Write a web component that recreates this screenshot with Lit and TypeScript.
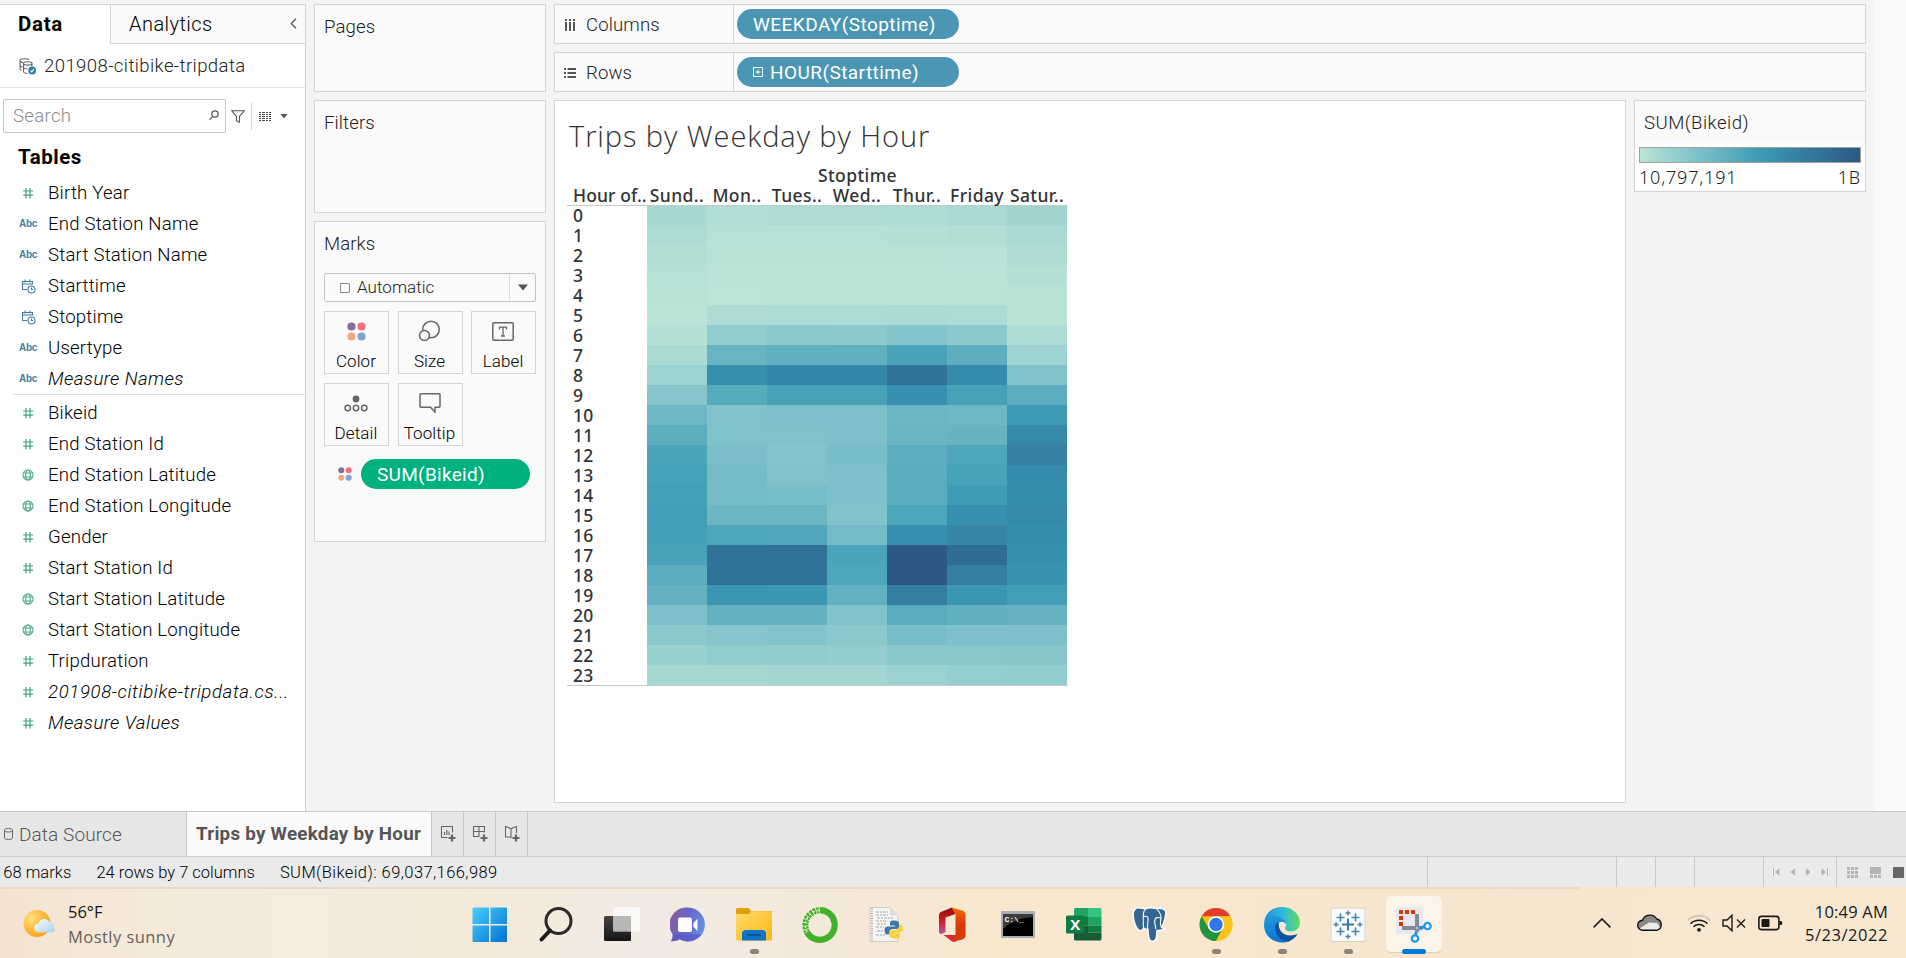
import { LitElement, html, css, svg, nothing } from "lit";
import { customElement } from "lit/decorators.js";

const RAMP = [
  "bce4d8", "aedcd5", "a1d5d2", "95cecf", "89c8cc", "7ec1ca", "72bac6", "66b2c2", "59acbe", "4ba5ba",
  "419eb6", "3b96b2", "358ead", "3586a7", "347ea1", "32779b", "316f96", "2f6790", "2d5f8a", "2c5985",
];

// Position of every hour/weekday cell on the colour ramp (0 = lowest, 19 = highest).
const CELLS: number[][] = [
  [1.6, 0.8, 1, 1, 1.1, 1.4, 2.2],
  [1.1, 0.4, 0.4, 0.4, 0.5, 0.7, 1.4],
  [0.7, 0.2, 0.2, 0.2, 0.2, 0.3, 1],
  [0.4, 0.1, 0.1, 0.1, 0.1, 0.1, 0.5],
  [0.2, 0, 0.15, 0.15, 0.15, 0.15, 0.2],
  [0.1, 1, 1.1, 1.1, 1.2, 1.1, 0.2],
  [0.5, 3.3, 3.9, 3.7, 4.5, 3.9, 1.1],
  [1.2, 6.8, 7.4, 7.4, 9.3, 7.6, 2.3],
  [2.3, 11.8, 12.7, 12.7, 15.6, 12.4, 4.8],
  [4.4, 8.2, 9.4, 9.4, 11.7, 9.4, 7.8],
  [6.3, 4.9, 5.1, 5.1, 6.6, 6.3, 10.5],
  [7.7, 4.8, 4.9, 5, 6.7, 6.9, 12.5],
  [9, 5.4, 4.6, 5.5, 7.8, 8.8, 13.5],
  [9.5, 5.7, 4.8, 5, 7.9, 9.3, 12.4],
  [9.7, 5.7, 5.5, 5, 7.9, 10.2, 12.1],
  [10, 6.5, 6.5, 4.7, 8.9, 11.7, 12.6],
  [9.9, 8.8, 8.6, 5.8, 11.7, 13, 12.1],
  [9.3, 15.6, 15.6, 9.1, 19, 16.3, 11.8],
  [7.9, 15.6, 15.6, 8.8, 19, 14, 11.5],
  [7.1, 11, 10.9, 7.3, 14, 11, 10],
  [5, 7.2, 7.2, 4.7, 8, 7.4, 7],
  [3.9, 4.4, 4.6, 3.8, 5.5, 5, 5],
  [2.7, 3.3, 3.4, 3.1, 4, 4.1, 4.2],
  [1.7, 1.7, 1.9, 1.9, 2.5, 3, 3.3],
];

const rampColor = (v: number) => {
  const i = Math.min(Math.floor(v), RAMP.length - 2);
  const t = v - i;
  const ch = (hex: string, k: number) => parseInt(hex.slice(k, k + 2), 16);
  const mix = [0, 2, 4].map((k) => Math.round(ch(RAMP[i], k) * (1 - t) + ch(RAMP[i + 1], k) * t));
  return `rgb(${mix.join(",")})`;
};

type Kind = "num" | "abc" | "date" | "geo";

const kindIcon = (kind: Kind) => {
  switch (kind) {
    case "abc":
      return html`<span class="abc">Abc</span>`;
    case "num":
      return html`<svg width="16" height="14" viewBox="0 0 16 14" fill="none" stroke="#3fa381" stroke-width="1.2">
        <path d="M6 2v10.500M10 2v10.500M3.200 5h10M3.200 9.200h10" />
      </svg>`;
    case "date":
      return html`<svg width="16" height="16" viewBox="0 0 16 16" fill="none" stroke="#3f7f9e" stroke-width="1.1">
        <path d="M7 11.500H2.500V3.500h10V6.500M2.500 6h10M5 1.500v3M10 1.500v3" />
        <circle cx="11.500" cy="11.500" r="3.500" /><path d="M11.500 9.500v2H13" />
      </svg>`;
    default:
      return html`<svg width="14" height="14" viewBox="0 0 14 14" fill="none" stroke="#4cab88" stroke-width="1.1">
        <circle cx="7" cy="7" r="5" /><ellipse cx="7" cy="7" rx="2.300" ry="5" /><path d="M2.500 5h9M2.500 9h9" />
      </svg>`;
  }
};

type NameStyle = "plain" | "italic" | "italic wide";

const DIMENSIONS: [Kind, string, NameStyle?][] = [
  ["num", "Birth Year"],
  ["abc", "End Station Name"],
  ["abc", "Start Station Name"],
  ["date", "Starttime"],
  ["date", "Stoptime"],
  ["abc", "Usertype"],
  ["abc", "Measure Names", "italic"],
];

const MEASURES: [Kind, string, NameStyle?][] = [
  ["num", "Bikeid"],
  ["num", "End Station Id"],
  ["geo", "End Station Latitude"],
  ["geo", "End Station Longitude"],
  ["num", "Gender"],
  ["num", "Start Station Id"],
  ["geo", "Start Station Latitude"],
  ["geo", "Start Station Longitude"],
  ["num", "Tripduration"],
  ["num", "201908-citibike-tripdata.cs...", "italic wide"],
  ["num", "Measure Values", "italic"],
];

const colorDots = (size: number) => html`<svg width=${size} height=${size} viewBox="0 0 20 20">
  <circle cx="4.700" cy="4.700" r="4.300" fill="#86709a" /><circle cx="15.300" cy="4.700" r="4.300" fill="#f46c80" />
  <circle cx="4.700" cy="15.300" r="4.300" fill="#f4a67c" /><circle cx="15.300" cy="15.300" r="4.300" fill="#80a4cd" />
</svg>`;

@customElement("data-pane")
export class DataPane extends LitElement {
  static styles = css`
    :host { display: flex; flex-direction: column; width: 305px; border-right: 1px solid #d0d0d0; background: #fff; }
    .tabs { display: flex; height: 40px; box-sizing: border-box; border-top: 1px solid #d4d4d4; }
    .tab-data { width: 110px; box-sizing: border-box; padding: 6px 0 0 18px; font-weight: 700; font-size: 20.500px; line-height: 27px; letter-spacing: .7px; }
    .tab-analytics {
      flex: 1; display: flex; align-items: center; justify-content: space-between; box-sizing: border-box;
      padding: 0 8px 1px 18px; border-left: 1px solid #d4d4d4; border-bottom: 1px solid #d4d4d4; background: #fafafa;
      font-size: 20px; letter-spacing: .45px;
    }
    .source {
      display: flex; align-items: center; gap: 7px; height: 43px; padding: 0 0 0 19px; color: #222;
      border-bottom: 1px solid #e3e3e3; letter-spacing: .38px;
    }
    .tools { display: flex; align-items: center; height: 34px; padding: 11px 0 0 3px; }
    .search {
      display: flex; align-items: center; justify-content: space-between; width: 223px; height: 34px; box-sizing: border-box;
      border: 1px solid #c6c6c6; border-radius: 2px; padding: 0 6px 1px 9px; color: #8c8c8c; letter-spacing: .3px;
    }
    .funnel { margin-left: 5px; }
    .sep { width: 1px; height: 27px; background: #d4d4d4; margin: 0 7px 0 6px; }
    .caret { margin-left: 9px; }
    .heading { margin: 11px 0 0 18px; height: 27px; line-height: 27px; font-weight: 700; font-size: 20.500px; letter-spacing: .5px; }
    .group { display: flex; flex-direction: column; padding-top: 6px; }
    .group + .group { margin-left: 13px; border-top: 1px solid #dcdcdc; padding-top: 2px; }
    .field { display: grid; grid-template-columns: 28px 1fr; gap: 6px; height: 31px; align-items: center; padding-left: 14px; }
    .group + .group .field { padding-left: 1px; }
    .glyph { display: flex; justify-content: center; }
    .abc { font: 700 10px/14px "Liberation Sans", sans-serif; color: #3f7f9e; letter-spacing: -.3px; }
    .plain { letter-spacing: .2px; }
    .italic { font-style: italic; letter-spacing: .42px; }
    .wide { letter-spacing: .62px; }
  `;

  private field([kind, name, style]: [Kind, string, NameStyle?]) {
    return html`<div class="field">
      <span class="glyph">${kindIcon(kind)}</span><span class=${style ?? "plain"}>${name}</span>
    </div>`;
  }

  render() {
    return html`
      <div class="tabs">
        <div class="tab-data">Data</div>
        <div class="tab-analytics">
          <span>Analytics</span>
          <svg width="7" height="11" viewBox="0 0 7 11" fill="none" stroke="#555" stroke-width="1.200"><path d="M6 .800L1.200 5.500 6 10.200" /></svg>
        </div>
      </div>
      <div class="source">
        <svg width="18" height="18" viewBox="0 0 18 18" fill="none" stroke="#666" stroke-width="1.100">
          <path d="M2.500 13.500C1.500 13 1 12.500 1 12V3.500C1 1.200 10 1.200 10 3M1 4c.500 1 1.500 1.300 3 1.500M1 8.500c.500 1 1.500 1.300 2.500 1.500" />
          <path d="M4.500 6.500c0-2.300 8.500-2.300 8.500 0v3M4.500 6.500v8c0 1 2 2 4 2M4.500 6.500c0 2.200 8.500 2.200 8.500 0M4.500 10.500c.500 1 2 1.500 4 1.500" />
          <circle cx="13.200" cy="13.500" r="3.900" fill="#2f7fa6" stroke="none" />
          <path d="M11.400 13.500l1.300 1.400 2.300-2.800" stroke="#fff" />
        </svg>
        <span>201908-citibike-tripdata</span>
      </div>
      <div class="tools">
        <div class="search">
          <span>Search</span>
          <svg width="10" height="11" viewBox="0 0 10 11" fill="none" stroke="#555" stroke-width="1.200">
            <circle cx="6" cy="4" r="3.200" /><path d="M3.600 6.300L.500 9.800" />
          </svg>
        </div>
        <svg class="funnel" width="14" height="13" viewBox="0 0 14 13" fill="none" stroke="#555" stroke-width="1.100"><path d="M.800.800h12.400L8.500 6.500v5.700l-3-1.500V6.500z" /></svg>
        <div class="sep"></div>
        <svg width="12" height="11" viewBox="0 0 12 11" stroke="#4a4a4a" stroke-width="1" shape-rendering="crispEdges"><path d="M0 1.500h12M0 3.500h12M0 5.500h12M0 7.500h12M0 9.500h12" stroke-dasharray="2 1 3 1 2 1" /></svg>
        <svg class="caret" width="8" height="5" viewBox="0 0 8 5"><path d="M.500 0h7L4 4.500z" fill="#555" /></svg>
      </div>
      <div class="heading">Tables</div>
      <div class="group">${DIMENSIONS.map((f) => this.field(f))}</div>
      <div class="group">${MEASURES.map((f) => this.field(f))}</div>
    `;
  }
}

@customElement("shelf-cards")
export class ShelfCards extends LitElement {
  static styles = css`
    :host { display: flex; flex-direction: column; gap: 8px; width: 232px; color: #222; }
    .card { box-sizing: border-box; border: 1px solid #d4d4d4; background: #fafafa; padding: 9px 9px 0; line-height: 27px; letter-spacing: .1px; }
    .pages { height: 88px; }
    .filters { height: 113px; }
    .marks { height: 321px; }
    .dropdown {
      display: grid; grid-template-columns: 1fr 26px; height: 29px; box-sizing: border-box; margin-top: 15px;
      border: 1px solid #c4c4c4; border-radius: 2px; font-size: 17px; align-items: stretch;
    }
    .choice { display: flex; align-items: center; gap: 7px; padding-left: 15px; letter-spacing: .05px; }
    .square { width: 8px; height: 8px; border: 1px solid #888; border-radius: 1px; }
    .arrow { display: flex; align-items: center; justify-content: center; border-left: 1px solid #dedede; }
    .buttons { display: grid; grid-template-columns: 65px 65px 65px; column-gap: 8.500px; row-gap: 9px; margin-top: 9px; }
    .button {
      display: flex; flex-direction: column; align-items: center; box-sizing: border-box; height: 63px; padding: 7px 1px 0 0; gap: 6px;
      border: 1px solid #d4d4d4; font-size: 17px; line-height: 24px; letter-spacing: .1px; color: #000;
    }
    .icon { height: 24px; display: flex; align-items: center; }
    .encoding { display: flex; align-items: center; gap: 9px; padding: 13px 0 0 14px; }
    .pill { width: 169px; height: 30px; box-sizing: border-box; border-radius: 15px; background: #00b180; color: #fff; padding-left: 16px; font-size: 19px; line-height: 31px; font-weight: 400; letter-spacing: .3px; }
  `;

  private button(label: string, icon: unknown) {
    return html`<div class="button"><span class="icon">${icon}</span><span>${label}</span></div>`;
  }

  render() {
    return html`
      <div class="card pages">Pages</div>
      <div class="card filters">Filters</div>
      <div class="card marks">
        <div>Marks</div>
        <div class="dropdown">
          <div class="choice"><span class="square"></span>Automatic</div>
          <div class="arrow"><svg width="12" height="7" viewBox="0 0 12 7"><path d="M1 .500h10L6 6.500z" fill="#555" /></svg></div>
        </div>
        <div class="buttons">
          ${this.button("Color", colorDots(19))}
          ${this.button("Size", html`<svg width="23" height="22" viewBox="0 0 23 22" stroke="#666" stroke-width="1.500"><circle cx="13" cy="9.500" r="8.300" fill="none" /><circle cx="6.500" cy="15.500" r="5" fill="#fafafa" /></svg>`)}
          ${this.button("Label", html`<svg width="22" height="19" viewBox="0 0 22 19" fill="none" stroke="#666" stroke-width="1.500"><rect x=".800" y=".800" width="20.400" height="17.400" rx="1" /><path d="M7.500 7.500V5.200h7v2.300M11 5.200v8.800M9 14h4" stroke-width="1.300" /></svg>`)}
          ${this.button("Detail", html`<svg width="24" height="17" viewBox="0 0 24 17" fill="none" stroke="#666" stroke-width="1.500"><circle cx="12" cy="4" r="3.400" fill="#666" stroke="none" /><circle cx="3.700" cy="13" r="2.700" /><circle cx="12" cy="13" r="2.700" /><circle cx="20.300" cy="13" r="2.700" /></svg>`)}
          ${this.button("Tooltip", html`<svg width="22" height="20" viewBox="0 0 22 20" fill="none" stroke="#666" stroke-width="1.500"><path d="M2 .800h18a1 1 0 0 1 1 1v11.400a1 1 0 0 1-1 1h-4V19l-4.500-4.800H2a1 1 0 0 1-1-1V1.800a1 1 0 0 1 1-1z" /></svg>`)}
        </div>
        <div class="encoding">${colorDots(14)}<div class="pill">SUM(Bikeid)</div></div>
      </div>
    `;
  }
}

@customElement("heat-map")
export class HeatMap extends LitElement {
  static styles = css`
    :host { display: block; width: 501px; font-family: "Noto Sans", "Open Sans", sans-serif; font-size: 17.500px; font-weight: 500; color: #333; letter-spacing: .4px; }
    .dimension { margin-left: 80px; width: 421px; text-align: center; height: 20px; line-height: 18px; }
    .head { display: grid; grid-template-columns: 80px repeat(7, 60px); height: 19px; line-height: 18px; border-bottom: 1px solid #c8c8c8; }
    .day { display: flex; justify-content: center; white-space: nowrap; }
    .corner { padding-left: 6px; white-space: nowrap; letter-spacing: .1px; }
    .body { border-bottom: 1px solid #c8c8c8; }
    .row { display: grid; grid-template-columns: 80px repeat(7, 60px); height: 20px; line-height: 20px; }
    .hour { padding-left: 6px; letter-spacing: .3px; }
    .row:first-child { height: 19px; line-height: 19px; }
  `;

  render() {
    const days = ["Sund..", "Mon..", "Tues..", "Wed..", "Thur..", "Friday", "Satur.."];
    return html`
      <div class="dimension">Stoptime</div>
      <div class="head"><span class="corner">Hour of..</span>${days.map((d) => html`<span class="day">${d}</span>`)}</div>
      <div class="body">
        ${CELLS.map((row, hour) => html`<div class="row">
          <span class="hour">${hour}</span>${row.map((v) => html`<span style="background:${rampColor(v)}"></span>`)}
        </div>`)}
      </div>
    `;
  }
}

@customElement("work-sheet")
export class WorkSheet extends LitElement {
  static styles = css`
    :host { display: flex; flex-direction: column; gap: 8px; width: 1312px; color: #222; }
    .shelf { display: grid; grid-template-columns: 179px 1fr; height: 40px; box-sizing: border-box; border: 1px solid #d4d4d4; background: #fafafa; }
    .name { display: flex; align-items: center; gap: 10px; padding: 1px 0 0 9px; border-right: 1px solid #d4d4d4; letter-spacing: .1px; }
    .drop { display: flex; align-items: center; padding-left: 3px; }
    .pill { display: flex; align-items: center; gap: 7px; width: 222px; height: 30px; box-sizing: border-box; border-radius: 15px; background: #4a96b3; color: #fff; padding-left: 16px; font-weight: 400; font-size: 19px; letter-spacing: .45px; }
    .main { display: flex; gap: 8px; align-items: flex-start; }
    .view { width: 1072px; height: 703px; box-sizing: border-box; border: 1px solid #d4d4d4; background: #fff; padding: 16px 0 0 12px; }
    .title { font: 300 29px/38px "Open Sans", "Noto Sans", sans-serif; letter-spacing: .92px; padding-left: 2px; height: 38px; margin-bottom: 11px; color: #333; }
    .legend { width: 232px; height: 92px; box-sizing: border-box; border: 1px solid #d4d4d4; background: #fff; }
    .legend-head { height: 42px; line-height: 44px; background: #fafafa; padding-left: 9px; letter-spacing: .45px; }
    .ramp { margin: 4px 4px 0; height: 14px; border: 1px solid #a3a394; }
    .ends { display: flex; justify-content: space-between; margin: 1px 4px 0 4px; font: 300 18px/26px "Noto Sans", sans-serif; letter-spacing: .8px; }
  `;

  render() {
    return html`
      <div class="shelf">
        <div class="name">
          <svg width="12" height="14" viewBox="0 0 12 14" fill="#555"><path d="M1 1h2v2H1zM5 1h2v2H5zM9 1h2v2H9zM1 4h2v9H1zM5 4h2v9H5zM9 4h2v9H9z" /></svg>
          <span>Columns</span>
        </div>
        <div class="drop"><div class="pill">WEEKDAY(Stoptime)</div></div>
      </div>
      <div class="shelf">
        <div class="name">
          <svg width="12" height="12" viewBox="0 0 12 12" fill="#555"><path d="M0 1h2v2H0zM0 5h2v2H0zM0 9h2v2H0zM3.500 1H12v2H3.500zM3.500 5H12v2H3.500zM3.500 9H12v2H3.500z" /></svg>
          <span>Rows</span>
        </div>
        <div class="drop"><div class="pill">
          <svg width="10" height="10" viewBox="0 0 10 10" fill="none" stroke="#fff"><path d="M.500.500h9v9h-9zM2.500 5h5M5 2.500v5" /></svg>
          <span>HOUR(Starttime)</span></div></div>
      </div>
      <div class="main">
        <div class="view">
          <div class="title">Trips by Weekday by Hour</div>
          <heat-map></heat-map>
        </div>
        <div class="legend">
          <div class="legend-head">SUM(Bikeid)</div>
          <div class="ramp" style="background:linear-gradient(90deg,${RAMP.map((c) => "#" + c).join(",")})"></div>
          <div class="ends"><span>10,797,191</span><span>1B</span></div>
        </div>
      </div>
    `;
  }
}

@customElement("sheet-footer")
export class SheetFooter extends LitElement {
  static styles = css`
    :host { display: block; }
    .tabs { display: flex; height: 45px; box-sizing: border-box; border-top: 1px solid #c8c8c8; background: #e6e6e6; color: #555; }
    .source { display: flex; align-items: center; gap: 6px; width: 187px; padding-left: 4px; box-sizing: border-box; border-right: 1px solid #c8c8c8; font-size: 19px; letter-spacing: .1px; }
    .active { width: 245px; box-sizing: border-box; background: #fafafa; border-right: 1px solid #c8c8c8; padding-left: 9px; line-height: 44px; font-size: 18.800px; letter-spacing: .25px; font-weight: 700; color: #555; white-space: nowrap; }
    .new { display: flex; align-items: center; justify-content: center; width: 32px; box-sizing: border-box; border-right: 1px solid #c8c8c8; padding-left: 1px; }
    .status { display: flex; height: 31px; box-sizing: border-box; border-top: 1px solid #d0d0d0; background: #eaeaea; font-size: 16.500px; line-height: 31px; color: #000; overflow: hidden; }
    .info { display: flex; gap: 25px; width: 1427px; white-space: nowrap; }
    .first { margin-left: -6px; letter-spacing: .05px; }
    .total { letter-spacing: .42px; }
    .cell { box-sizing: border-box; border-left: 1px solid #c8c8c8; display: flex; align-items: center; }
    .w189 { width: 189px; }
    .w39 { width: 39px; }
    .w69 { width: 69px; }
    .nav { width: 73px; padding-left: 9px; gap: 9.500px; }
    .modes { width: 70px; padding-left: 10px; gap: 12px; }
  `;

  render() {
    const plus = svg`<path d="M12 9.500v7M8.500 13h7" stroke-width="2.200" />`;
    return html`
      <div class="tabs">
        <div class="source">
          <svg width="9" height="12" viewBox="0 0 9 12" fill="none" stroke="#666"><path d="M.500 2.200v7.600c0 2.200 8 2.200 8 0V2.200c0-2.200-8-2.200-8 0zm0 .300c0 2 8 2 8 0" /></svg>
          <span>Data Source</span>
        </div>
        <div class="active">Trips by Weekday by Hour</div>
        <div class="new"><svg width="17" height="18" viewBox="0 0 17 18" fill="none" stroke="#666" stroke-width="1.100"><path d="M7.500 12.500h-6v-11h11v6M4.500 10V7M6.800 10V5M9 10V6.500" />${plus}</svg></div>
        <div class="new"><svg width="17" height="18" viewBox="0 0 17 18" fill="none" stroke="#666" stroke-width="1.100"><path d="M7.500 11.500h-6v-10h11v6M1.500 6.500h11M7 1.500v10" />${plus}</svg></div>
        <div class="new"><svg width="17" height="18" viewBox="0 0 17 18" fill="none" stroke="#666" stroke-width="1.100"><path d="M7.500 13l-1-1-5 0V1.500l4 1.500 1.500 1 1.500-1 4-1.500V8M7 4v8" />${plus}</svg></div>
      </div>
      <div class="status">
        <div class="info"><span class="first">168 marks</span><span>24 rows by 7 columns</span><span class="total">SUM(Bikeid): 69,037,166,989</span></div>
        <div class="cell w189"></div><div class="cell w39"></div><div class="cell w39"></div><div class="cell w69"></div>
        <div class="cell nav">
          <svg width="7" height="8" viewBox="0 0 7 8" fill="#b4b4b4"><path d="M0 0h1v8H0zM6.500.300v7.400L1.800 4z" /></svg>
          <svg width="6" height="8" viewBox="0 0 6 8" fill="#b4b4b4"><path d="M5 .300v7.400L.500 4z" /></svg>
          <svg width="6" height="8" viewBox="0 0 6 8" fill="#b4b4b4"><path d="M1 .300v7.400L5.500 4z" /></svg>
          <svg width="7" height="8" viewBox="0 0 7 8" fill="#b4b4b4"><path d="M6 0h1v8H6zM.500.300v7.400L5.200 4z" /></svg>
        </div>
        <div class="cell modes">
          <svg width="11" height="11" viewBox="0 0 11 11" fill="#b4b4b4"><path d="M0 0h3v3H0zM4 0h3v3H4zM8 0h3v3H8zM0 4h3v3H0zM4 4h3v3H4zM8 4h3v3H8zM0 8h3v3H0zM4 8h3v3H4zM8 8h3v3H8z" /></svg>
          <svg width="11" height="11" viewBox="0 0 11 11" fill="#b4b4b4"><path d="M0 0h11v7H0zM0 8h3v3H0zM4 8h3v3H4zM8 8h3v3H8z" /></svg>
          <svg width="11" height="11" viewBox="0 0 11 11"><rect width="11" height="11" rx=".500" fill="#666" /></svg>
        </div>
      </div>
    `;
  }
}

const APPS: { art: unknown; running?: boolean; active?: boolean }[] = [
  { art: svg`<defs><linearGradient id="w" gradientUnits="userSpaceOnUse" x1="0" y1="0" x2="35" y2="35"><stop offset="0" stop-color="#4cd0fe" /><stop offset="1" stop-color="#0072d0" /></linearGradient></defs>
    <path d="M.500 1.500a1 1 0 0 1 1-1H17V17H.500zM18.500.500H34a1 1 0 0 1 1 1V17H18.500zM.500 18.500H17V35H1.500a1 1 0 0 1-1-1zM18.500 18.500H35V34a1 1 0 0 1-1 1H18.500z" fill="url(#w)" />` },
  { art: svg`<circle cx="20.500" cy="14" r="12.500" fill="none" stroke="#2a2a2a" stroke-width="3" /><path d="M12 23.500L3.500 32.500" stroke="#1c1c1c" stroke-width="4" stroke-linecap="round" />` },
  { art: svg`<defs><linearGradient id="k" x1="0" y1="0" x2="0" y2="1"><stop offset="0" stop-color="#484440" /><stop offset="1" stop-color="#141414" /></linearGradient></defs>
    <rect x="0" y="9" width="27" height="25" rx="1.500" fill="url(#k)" /><rect x="9" y="0" width="27" height="24.500" rx="1.500" fill="#fff" opacity=".68" /><path d="M9 9h18v15.500H9z" fill="#b5b5b5" opacity=".7" />` },
  { art: svg`<defs><linearGradient id="t" x1="0" y1=".2" x2="1" y2=".5"><stop offset="0" stop-color="#8a5f9c" /><stop offset=".5" stop-color="#6664c8" /><stop offset="1" stop-color="#6690e8" /></linearGradient></defs>
    <path d="M18 .500a17 17 0 1 1-8.500 31.800C6.500 34 3.500 34.500 1 34.200c1-1.800 2-4 1.600-7A17 17 0 0 1 18 .500z" fill="url(#t)" /><path d="M1 34.200c1-1.800 2-4 1.600-7l29 0A17 17 0 0 1 9.500 32.300C6.500 34 3.500 34.500 1 34.200z" fill="#5658c4" opacity=".7" />
    <rect x="8" y="10.500" width="14" height="14.500" rx="2" fill="#fff" /><path d="M23.500 16l4-4.200V24l-4-4.200z" fill="#fff" />` },
  { running: true, art: svg`<defs><linearGradient id="f" x1="0" y1="0" x2="1" y2="1"><stop offset="0" stop-color="#ffdb6e" /><stop offset="1" stop-color="#fbb712" /></linearGradient></defs>
    <path d="M0 2.500A1.500 1.500 0 0 1 1.500 1h11L15 4h20a1 1 0 0 1 1 1v6H0z" fill="#e0a106" /><path d="M0 7h12.500l3-2.800H35a1 1 0 0 1 1 1V32a1.500 1.500 0 0 1-1.500 1.500h-33A1.500 1.500 0 0 1 0 32z" fill="url(#f)" />
    <path d="M6 33.500V27a4 4 0 0 1 4-4h16a4 4 0 0 1 4 4v6.500z" fill="#0c74c4" /><path d="M11 28h14" stroke="#0a4c8c" stroke-width="1.600" />` },
  { art: svg`<path d="M18 3.200a14.800 14.800 0 1 1-13 22" fill="none" stroke="#43b02a" stroke-width="6.200" /><path d="M5 25A15 15 0 0 1 18 3.200" fill="none" stroke="#43b02a" stroke-width="6" stroke-dasharray="2.500 .800" /><path d="M5 25A15 15 0 0 1 18 3.200" fill="none" stroke="#e3f3d8" stroke-width="1.300" stroke-dasharray="2 2.500" />` },
  { art: svg`<path d="M2 .500h20l8 8v26H2z" fill="#f4f4f4" stroke="#cfcac2" /><path d="M22 .500v8h8z" fill="#dcdcdc" /><path d="M4 1v33" stroke="#aaa" stroke-dasharray="1 1.500" stroke-width="2" /><path d="M8 5h12M8 8h12M9 11h16M8 14h10M9 17h9M8 20h8M9 24h6M8 28h9" stroke="#a8a8a8" stroke-dasharray="3 1 2 1" />
    <path d="M26 13.500c-4 0-4 1.500-4 3v2h5v1h-7c-2.500 0-3.500 1.500-3.500 4s1 4 3 4h2v-2.500c0-2 1.500-3 3-3h4c1.500 0 2.500-1 2.500-2.500v-3c0-2-1.500-3-5-3z" fill="#3d78a8" />
    <path d="M28 31.500c4 0 4-1.500 4-3v-2h-5v-1h4c3 0 4-1.500 4-4s-1.500-4-3-4h-1v2.500c0 2-1.500 3-3 3h-4c-1.500 0-2.500 1-2.500 2.500v3c0 2 2 3 6.500 3z" fill="#ffd23c" />` },
  { art: svg`<defs><linearGradient id="o" x1="0" y1="0" x2="0" y2="1"><stop offset="0" stop-color="#900c10" /><stop offset=".5" stop-color="#cc1c20" /><stop offset="1" stop-color="#b858a8" /></linearGradient><linearGradient id="o2" x1="0" y1="0" x2="0" y2="1"><stop offset="0" stop-color="#f07000" /><stop offset=".5" stop-color="#d83808" /><stop offset="1" stop-color="#d83c04" /></linearGradient></defs>
    <path d="M18 .500L8 4.500a4 4 0 0 0-3 4V25c0 1.500 2 2.500 4 1.500l2.500-1.500V10.500L21.500 7z" fill="url(#o)" /><path d="M9.500 28h12.500v6.500l-3.500.300z" fill="#e02838" /><path d="M18 .500L28 3.500c2 .600 3.500 2 3.500 4v21c0 2-1.500 3.400-3.500 4L19 35l2.500-5V7z" fill="url(#o2)" />` },
  { art: svg`<rect x="1" y="4" width="34" height="27" rx="1" fill="#a8aeb6" /><rect x="3" y="7" width="30" height="22" fill="#000" /><path d="M3 7h30v3C20 11 10 15 3 22z" fill="#3c3c3c" /><text x="4.500" y="14.500" font-family="Liberation Mono" font-size="8" font-weight="700" fill="#fff">C:\\_</text>` },
  { art: svg`<path d="M8 2.500a1.500 1.500 0 0 1 1.500-1.500H22v9H8z" fill="#21a366" /><path d="M22 1h12a1.500 1.500 0 0 1 1.500 1.500V10H22z" fill="#33c481" /><path d="M8 10h14v8.500H8z" fill="#107c41" /><path d="M22 10h13.500v8.500H22z" fill="#21a366" /><path d="M22 18.500h13.500v7H22z" fill="#107c41" /><path d="M8 18.500h14v7h13.500V32a1.500 1.500 0 0 1-1.500 1.500H9.500A1.500 1.500 0 0 1 8 32z" fill="#185c37" />
    <rect x="0" y="8.500" width="18.500" height="18" rx="1.500" fill="#107c41" /><text x="9.200" y="23" text-anchor="middle" font-family="Open Sans" font-size="15" font-weight="700" fill="#fff">X</text>` },
  { art: svg`<path d="M8 1C3.500.500 1 3 1.200 8c.300 6 3 14 6.500 15.500 1.800.500 3-1 4-2.500 1.500 1.200 3 1.500 4.300 1.300.500 4-.500 12 4.500 12 4 0 4-4 4.500-11 3 .200 6.500-.500 8-2-1.500-.300-3 0-3.500-.800C31.500 17 34 9 33.700 5c-.500-3-4.700-4.500-9-3.300C20.500.500 16 .500 13.500 2 12 1.300 10 1 8 1z" fill="#336791" stroke="#fff" stroke-width="1.300" />
    <path d="M13.500 2C11 4 11 10 11.300 14c.200 3-.500 5 .500 7M24.500 1.700C28 5 30 9 28.500 14c-.500 2 0 4 1 6.500M15.500 22.300c-.500-5 1-7.500.500-11.300-.500-1.500-2.500-2-4.500-1.500M23.500 22c1-3-2-5-.500-9.500.500-2 3-2.500 5.500-1.500" fill="none" stroke="#fff" stroke-width="1.100" />` },
  { running: true, art: svg`<circle cx="18" cy="17.500" r="16.500" fill="#fbc116" /><path d="M3.700 9.300A16.500 16.500 0 0 1 32.300 9.300H18z" fill="#e33b2e" /><path d="M3.700 9.300A16.500 16.500 0 0 0 18 34l7.100-12.400-14.200 0z" fill="#229342" /><path d="M32.300 9.300H18l7.100 12.300L18 34A16.500 16.500 0 0 0 32.300 9.300z" fill="#fcc31e" /><circle cx="18" cy="17.500" r="8.300" fill="#fff" /><circle cx="18" cy="17.500" r="6.700" fill="#2f78ec" />` },
  { running: true, art: svg`<defs><linearGradient id="e" x1="0" y1=".3" x2="1" y2=".3"><stop offset="0" stop-color="#1a90d0" /><stop offset=".5" stop-color="#30b8e0" /><stop offset="1" stop-color="#62dc60" /></linearGradient><linearGradient id="e2" x1="0" y1="0" x2="0" y2="1"><stop offset="0" stop-color="#1f98dc" /><stop offset="1" stop-color="#0874d4" /></linearGradient></defs>
    <path d="M.300 15C1.500 5 9 0 18 0c11 0 18 8 18 15.500 0 6-4.500 9-9 9-4 0-6-1.500-6-3 0-1 1.200-1.500 1.200-3.700C22.200 14 18 12 14 12 7 12 .500 17 .300 15z" fill="url(#e)" /><path d="M.200 16C1.500 11 6 9 10 9c7 0 12 4 12 8.500-3-6-12-1-10 6 1.500 6 6.500 10 11 11.500C10 38-1.500 28 .200 16z" fill="url(#e2)" /><path d="M14.500 14.500C10 17 10 24 14 29.500c3 4 8 6 11 5 3.500-1.500 7-4.500 8.500-7.500-6 2.500-13 1.500-16-2-2.500-3-3-6.500-3-10.500z" fill="#0d529c" />` },
  { running: true, art: svg`<rect x="1" y="1" width="34" height="33.500" fill="#f8f9fb" stroke="#d8d4cc" /><path d="M18 11.500v12M12 17.500h12" stroke="#3a7aa8" stroke-width="2" /><path d="M10.500 6.500v8M6.500 10.500h8M25.500 6.500v8M21.500 10.500h8M10.500 20.500v8M6.500 24.500h8M25.500 20.500v8M21.500 24.500h8" stroke="#4a88b0" stroke-width="1.700" /><path d="M18 3.500v5M15.500 6h5M18 27v5M15.500 29.500h5M6 15v5M3.500 17.500h5M30 15v5M27.500 17.500h5" stroke="#4c7fa4" stroke-width="1.300" />` },
  { active: true, art: svg`<rect x="0" y="0" width="27" height="27" rx="3" fill="#e6eaf0" /><path d="M3 5h4M9 5h4M15 5h4" stroke="#d83b01" stroke-width="4" /><path d="M5 9v4M5 15v4" stroke="#d83b01" stroke-width="4" /><path d="M21 7v18M6 21h20" stroke="#848b94" stroke-width="4" fill="none" /><circle cx="21" cy="21" r="1.300" fill="#b9bec4" /><path d="M24 21l4-1M20.500 25l-1 3" stroke="#1b94dc" stroke-width="3" /><circle cx="31.500" cy="19" r="3.200" fill="#fff" stroke="#1b9ce4" stroke-width="2.300" /><circle cx="19" cy="31.500" r="3.200" fill="#fff" stroke="#1b9ce4" stroke-width="2.300" />` },
];

@customElement("task-bar")
export class TaskBar extends LitElement {
  static styles = css`
    :host {
      display: flex; height: 71px; box-sizing: border-box; border-top: 2px solid #ead9c4; font-family: "Open Sans", "Noto Sans", sans-serif; font-size: 16.500px; font-weight: 400; color: #1c1a18;
      background: linear-gradient(90deg, #f5e3d0 0, #f5e9d9 130px, #f5ecdf 300px, #f5ead9 470px, #f2ebe4 640px, #f5e8d8 860px, #f9e8ce 1000px, #f7e6cf 1500px, #f8e8d2 1906px);
      border-image: linear-gradient(90deg, #e9d8c6 1578px, #f7e6cf 1578px) 1;
    }
    .weather { display: flex; width: 457px; gap: 12px; padding: 11px 0 0 22px; box-sizing: border-box; line-height: 24.500px; }
    .weather svg { margin-top: 9px; }
    .muted { color: #66615b; letter-spacing: .45px; }
    .apps { display: flex; width: 990px; }
    .app { display: flex; justify-content: center; width: 66px; }
    .tile { display: flex; flex-direction: column; align-items: center; box-sizing: border-box; width: 56px; height: 56px; margin-top: 7px; padding-top: 10.500px; border-radius: 5px; gap: 6px; }
    .tile.active { background: #fcf4e8; box-shadow: 0 1px 1px #dccfb9; }
    .tile svg { flex: none; }
    .mark { width: 9px; height: 5px; border-radius: 3px; background: #8b8478; flex: none; }
    .active .mark { width: 24px; background: #0078d7; }
    .tray { display: flex; align-items: center; flex: 1; padding-bottom: 2px; }
    .up { margin-left: 146px; }
    .cloud { margin-left: 26px; }
    .wifi { margin-left: 24px; }
    .mute { margin-left: 11px; }
    .battery { margin-left: 12px; }
    .clock { flex: 1; text-align: right; line-height: 23px; padding-right: 18px; white-space: nowrap; letter-spacing: .2px; }
    .date { letter-spacing: .55px; }
  `;

  render() {
    return html`
      <div class="weather">
        <svg width="34" height="31" viewBox="0 0 34 31">
          <defs>
            <radialGradient id="sun" cx=".3" cy=".3" r=".8"><stop offset="0" stop-color="#ffe07a" /><stop offset="1" stop-color="#ff9a10" /></radialGradient>
            <linearGradient id="cl" x1="0" y1="0" x2="1" y2="1"><stop offset="0" stop-color="#fff" /><stop offset="1" stop-color="#a8cdea" /></linearGradient>
          </defs>
          <circle cx="15" cy="14.500" r="13.500" fill="url(#sun)" />
          <path d="M17 23.500a4.500 4.500 0 0 1-.500-9 6 6 0 0 1 11-1.500c3.500-.500 5 2 4.500 4.500 1.500 2.500.500 6-3 6z" fill="url(#cl)" />
        </svg>
        <div><div>56°F</div><div class="muted">Mostly sunny</div></div>
      </div>
      <div class="apps">
        ${APPS.map((a) => html`<div class="app"><div class=${a.active ? "tile active" : "tile"}>
          <svg width="36" height="36" viewBox="0 0 36 36">${a.art}</svg>${a.running || a.active ? html`<span class="mark"></span>` : nothing}
        </div></div>`)}
      </div>
      <div class="tray">
        <svg class="up" width="18" height="10" viewBox="0 0 18 10" fill="none" stroke="#1c1a18" stroke-width="1.500"><path d="M.600 9.400L9 .900l8.400 8.500" /></svg>
        <svg class="cloud" width="26" height="17" viewBox="0 0 26 17"><path d="M6 16.200a5 5 0 0 1-.500-10A8 8 0 0 1 19.800 5a5.800 5.800 0 0 1 .200 11.200z" fill="#8d8a86" /><path d="M2.500 14.500L12 8.500l8 .500 4 5.500-3 1.700H6z" fill="#ececec" /><path d="M6 16.200a5 5 0 0 1-.500-10A8 8 0 0 1 19.800 5a5.800 5.800 0 0 1 .200 11.200z" fill="none" stroke="#111" stroke-width="1.400" /></svg>
        <svg class="wifi" width="24" height="18" viewBox="0 0 24 18" fill="none" stroke="#1c1a18" stroke-width="1.500"><path d="M.700 6.500a16 16 0 0 1 22.600 0" stroke="#cbbfab" /><path d="M3.500 9.800a12 12 0 0 1 17 0M6.500 12.800a7.800 7.800 0 0 1 11 0" /><circle cx="12" cy="15.800" r="1.900" fill="#1c1a18" stroke="none" /></svg>
        <svg class="mute" width="24" height="18" viewBox="0 0 24 18" fill="none" stroke="#1c1a18" stroke-width="1.400"><path d="M1 6h4l5-4.800v15.600L5 12H1zM15 5.500l8 8M23 5.500l-8 8" /></svg>
        <svg class="battery" width="25" height="16" viewBox="0 0 25 16"><rect x=".900" y="1.400" width="20" height="13.200" rx="2.500" fill="none" stroke="#1c1a18" stroke-width="1.600" /><rect x="3.500" y="4" width="8" height="8" rx="1" fill="#1c1a18" /><path d="M21.500 6h1.200a1.500 1.500 0 0 1 1.500 1.500v1a1.500 1.500 0 0 1-1.500 1.500h-1.200z" fill="#1c1a18" /></svg>
        <div class="clock"><div>10:49 AM</div><div class="date">5/23/2022</div></div>
      </div>
    `;
  }
}

@customElement("app-root")
export class AppRoot extends LitElement {
  static styles = css`
    :host { display: flex; flex-direction: column; width: 1906px; height: 958px; overflow: hidden; background: #f4f4f4; font-family: Roboto, "Open Sans", sans-serif; font-weight: 300; font-size: 18.600px; color: #000; }
    .workspace { display: flex; height: 811px; }
    .left { display: flex; padding-top: 4px; }
    .cards { padding: 4px 8px 0; }
    .sheet { padding-top: 4px; }
    .strip { width: 32px; margin-left: auto; background: #fafafa; }
  `;

  render() {
    return html`
      <div class="workspace">
        <div class="left"><data-pane></data-pane></div>
        <div class="cards"><shelf-cards></shelf-cards></div>
        <div class="sheet"><work-sheet></work-sheet></div>
        <div class="strip"></div>
      </div>
      <sheet-footer></sheet-footer>
      <task-bar></task-bar>
    `;
  }
}
